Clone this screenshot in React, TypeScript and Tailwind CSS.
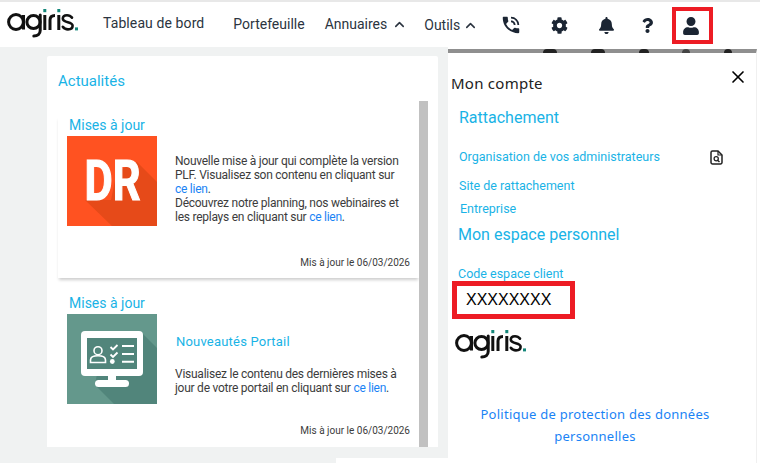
import React from 'react';
import { FaBell, FaCog, FaQuestion, FaUser } from 'react-icons/fa';
import { LuChevronUp, LuX } from 'react-icons/lu';
import { MdPhoneInTalk } from 'react-icons/md';

function AgirisLogo() {
  return (
    <svg width="72" height="30" viewBox="0 0 72 30" fill="none" role="img" aria-label="agiris">
      <g stroke="#111" strokeWidth="3" strokeLinecap="round">
        <circle cx="9" cy="14" r="7.4" />
        <path d="M16.5 7v14.5" strokeLinecap="butt" />
        <circle cx="26.5" cy="14" r="6.6" />
        <path d="M33.2 7v15.5c0 3.5-2.6 5.5-6.4 5.5" />
        <path d="M37.8 7v15" strokeLinecap="butt" />
        <path d="M43 22V12c0-3 1.8-4.6 5-4.6" strokeLinecap="butt" />
        <path d="M51.8 7v15" strokeLinecap="butt" />
        <path d="M65 9.6c-1.2-1.6-3-2.4-5-2.4-2.6 0-4.2 1.4-4.2 3.4 0 5 9.8 2.4 9.8 7.2 0 2.2-1.9 3.6-4.6 3.6-2.2 0-4-.9-5.2-2.6" strokeWidth="2.6" />
      </g>
      <rect x="36.3" y="1" width="3" height="3.2" fill="#14877a" />
      <rect x="50.3" y="1" width="3" height="3.2" fill="#14877a" />
      <rect x="68" y="19.4" width="3" height="3" fill="#14877a" />
    </svg>
  );
}

function DrTile() {
  return (
    <svg width="90" height="90" viewBox="0 0 90 90" className="shrink-0">
      <rect width="90" height="90" fill="#ff5221" />
      <path d="M18 64 L45 90 L90 90 L90 46 L70 26 L50 35 L44 64 Z" fill="#e64a19" />
      <text x="17.5" y="64" fontFamily="Roboto" fontWeight="700" fontSize="55" fill="#fff" stroke="#fff" strokeWidth="1.2" textLength="56" lengthAdjust="spacingAndGlyphs">
        DR
      </text>
    </svg>
  );
}

function PortalTile() {
  return (
    <svg width="90" height="90" viewBox="0 0 90 90" className="shrink-0">
      <rect width="90" height="90" fill="#64988c" />
      <path d="M74 18 L90 34 L90 90 L47 90 L28 71 L30 60 Z" fill="#51857b" />
      <rect x="14" y="17" width="62" height="45" rx="4" fill="#fff" />
      <rect x="20" y="24" width="50" height="31" fill="#51857b" />
      <rect x="41" y="61" width="8" height="6" fill="#fff" />
      <rect x="28" y="66" width="34" height="7" rx="3.5" fill="#fff" />
      <g stroke="#fff" fill="none">
        <circle cx="31" cy="36.7" r="4" strokeWidth="1.6" />
        <path d="M23.5 48.5v-2.5c0-2.6 3-4.2 7.5-4.2s7.5 1.6 7.5 4.2v2.5z" strokeWidth="1.6" />
        <path d="M43.5 33l2.5 2.5 4.5-4.5" strokeWidth="1.8" />
        <path d="M43.5 40.5l2.5 2.5 4.5-4.5" strokeWidth="1.8" />
        <path d="M55 32h12M55 40h12M55 47.8h12" strokeWidth="2" />
      </g>
      <circle cx="45.3" cy="47.5" r="2.4" fill="#fff" />
    </svg>
  );
}

function FileSearchIcon() {
  return (
    <svg width="13" height="15" viewBox="0 0 13 15" fill="none" className="ml-[50px]">
      <path d="M2.5 1h5.500l4 4v7.500a1.500 1.500 0 0 1-1.500 1.500h-8A1.500 1.500 0 0 1 1 12.500v-10A1.500 1.500 0 0 1 2.500 1z" stroke="#222" strokeWidth="1.5" />
      <path d="M8 1v4h4" stroke="#222" strokeWidth="1.2" />
      <circle cx="6.2" cy="8.8" r="2.1" stroke="#222" strokeWidth="1.3" />
      <path d="M7.800 10.400l1.700 1.700" stroke="#222" strokeWidth="1.4" />
    </svg>
  );
}

function ClientLink() {
  return <span className="text-[#1a83f5]">ce lien</span>;
}

export default function App() {
  return (
    <div className="relative flex h-[471px] w-[760px] flex-col overflow-hidden bg-white font-['Roboto',sans-serif]">
      {/* header */}
      <header className="relative flex h-[47px] shrink-0 items-start border-t-[2px] border-[#e8e8e8] text-[14px] text-[#2b3440]">
        <div className="ml-[7px] mt-[6px]">
          <AgirisLogo />
        </div>
        <span className="ml-[24px] mt-[11px] tracking-[0.1px]">Tableau de bord</span>
        <span className="ml-[29px] mt-[12px]">Portefeuille</span>
        <span className="ml-[20px] mt-[12px] flex items-center gap-[5px]">
          Annuaires <LuChevronUp size={15} strokeWidth={2.5} />
        </span>
        <span className="ml-[17px] mt-[13px] flex items-center gap-[3px]">
          Outils <LuChevronUp size={15} strokeWidth={2.5} />
        </span>
        <div className="ml-[22px] mt-[12px] flex items-center text-[#1b2533]">
          <MdPhoneInTalk size={22} />
          <FaCog size={17} className="ml-[29px]" />
          <FaBell size={17} className="ml-[30px]" />
          <FaQuestion size={15} className="ml-[25px]" />
        </div>
        <div className="absolute left-[672px] top-[5px] flex h-[37px] w-[41px] items-center justify-center border-[4px] border-[#ed1c24] pr-[3px] text-[#1b2533]">
          <FaUser size={18} />
        </div>
      </header>

      <div className="flex h-[416px] shrink-0">
        {/* left side */}
        <div className="relative h-full w-[448px] shrink-0 bg-[#f0f2f2] pl-[47px] pt-[9px]">
          <section className="relative h-[391px] w-[391px] rounded-t-[2px] bg-white pl-[11px]">
            <h2 className="pt-[16px] text-[15px] leading-[18px] text-[#19b3e6]">Actualités</h2>
            <div className="absolute bottom-0 left-[372px] h-[346px] w-[9px] bg-[#c1c1c1]" />

            <article className="mt-[26px] flex h-[162px] w-[361px] flex-col shadow-[0_3px_3px_-1px_rgba(0,0,0,0.2)]">
              <h3 className="pl-[11px] text-[14px] leading-[18px] text-[#19b3e6]">Mises à jour</h3>
              <div className="mt-[2px] flex pl-[9px]">
                <DrTile />
                <p className="ml-[18px] mt-[18px] w-[228px] text-[12px] leading-[14px] tracking-[-0.25px] text-[#3c3c3c]">
                  Nouvelle mise à jour qui complète la version PLF. Visualisez son contenu en cliquant sur{' '}
                  <ClientLink />.<br />
                  Découvrez notre planning, nos webinaires et les replays en cliquant sur <ClientLink />.
                </p>
              </div>
              <p className="mt-[30px] pr-[9px] text-right text-[10px] leading-[14px] text-[#3c3c3c]">
                Mis à jour le 06/03/2026
              </p>
            </article>

            <article className="mt-[16px] flex w-[361px] flex-col">
              <h3 className="pl-[11px] text-[14px] leading-[18px] text-[#19b3e6]">Mises à jour</h3>
              <div className="mt-[2px] flex pl-[9px]">
                <PortalTile />
                <div className="ml-[18px] w-[236px]">
                  <p className="ml-[1px] mt-[20px] text-[13px] leading-[15px] tracking-[0.2px] text-[#19b3e6]">Nouveautés Portail</p>
                  <p className="mt-[18px] w-[228px] text-[12px] leading-[14px] tracking-[-0.25px] text-[#3c3c3c]">
                    Visualisez le contenu des dernières mises à jour de votre portail en cliquant sur <ClientLink />.
                  </p>
                </div>
              </div>
              <p className="mt-[20px] pr-[9px] text-right text-[10px] leading-[14px] text-[#3c3c3c]">
                Mis à jour le 06/03/2026
              </p>
            </article>
          </section>
          <div className="absolute bottom-0 right-0 h-[5px] w-[112px] bg-white" />
        </div>

        {/* account drawer */}
        <aside className="relative mt-[2px] flex h-[414px] w-[309px] shrink-0 flex-col border-r border-[#f0f0f0] border-t-[4px] border-t-[#8f8f8f] bg-white">
          <div className="absolute -top-[4px] left-[95px] h-[4px] w-[14px] rounded-t-full bg-[#222]" />
          <div className="absolute -top-[4px] left-[143px] h-[4px] w-[14px] rounded-t-full bg-[#222]" />
          <div className="absolute -top-[4px] left-[191px] h-[4px] w-[10px] rounded-t-full bg-[#222]" />
          <div className="absolute -top-[4px] left-[234px] h-[4px] w-[8px] rounded-t-full bg-[#444]" />
          <div className="absolute -top-[4px] left-[276px] h-[4px] w-[8px] rounded-t-full bg-[#222]" />

          <div className="flex items-start justify-between pl-[3px] pr-[8px]">
            <h2 className="mt-[20px] font-['Noto_Sans',sans-serif] text-[15px] leading-[20px] tracking-[0.25px] text-[#222]">Mon compte</h2>
            <LuX size={20} strokeWidth={2} className="mt-[14px] text-black" />
          </div>

          <div className="flex flex-col pl-[11px] text-[#19b3e6]">
            <h3 className="mt-[15px] text-[16px] leading-[20px]">Rattachement</h3>
            <div className="mt-[21px] flex items-center">
              <span className="text-[12.5px] leading-[16px]">Organisation de vos administrateurs</span>
              <FileSearchIcon />
            </div>
            <span className="mt-[13px] text-[12.5px] leading-[16px]">Site de rattachement</span>
            <span className="ml-[1px] mt-[7px] text-[12.5px] leading-[16px]">Entreprise</span>
            <h3 className="-ml-[1px] mt-[8px] text-[16px] leading-[20px]">Mon espace personnel</h3>
            <span className="-ml-[1px] mt-[21px] text-[12.5px] leading-[16px]">Code espace client</span>
          </div>

          <div className="ml-[4px] -mt-[1px] flex h-[38px] w-[123px] items-center border-[5px] border-[#ed1c24] pl-[9px] font-['Liberation_Sans',sans-serif] text-[16px] text-black">
            XXXXXXXX
          </div>

          <div className="ml-[7px] mt-[10px]">
            <AgirisLogo />
          </div>

          <p className="ml-[17px] mt-[44px] w-[260px] text-center font-['Noto_Sans',sans-serif] text-[13px] leading-[22px] tracking-[0.25px] text-[#1a83f5]">
            Politique de protection des données personnelles
          </p>
        </aside>
      </div>
    </div>
  );
}
